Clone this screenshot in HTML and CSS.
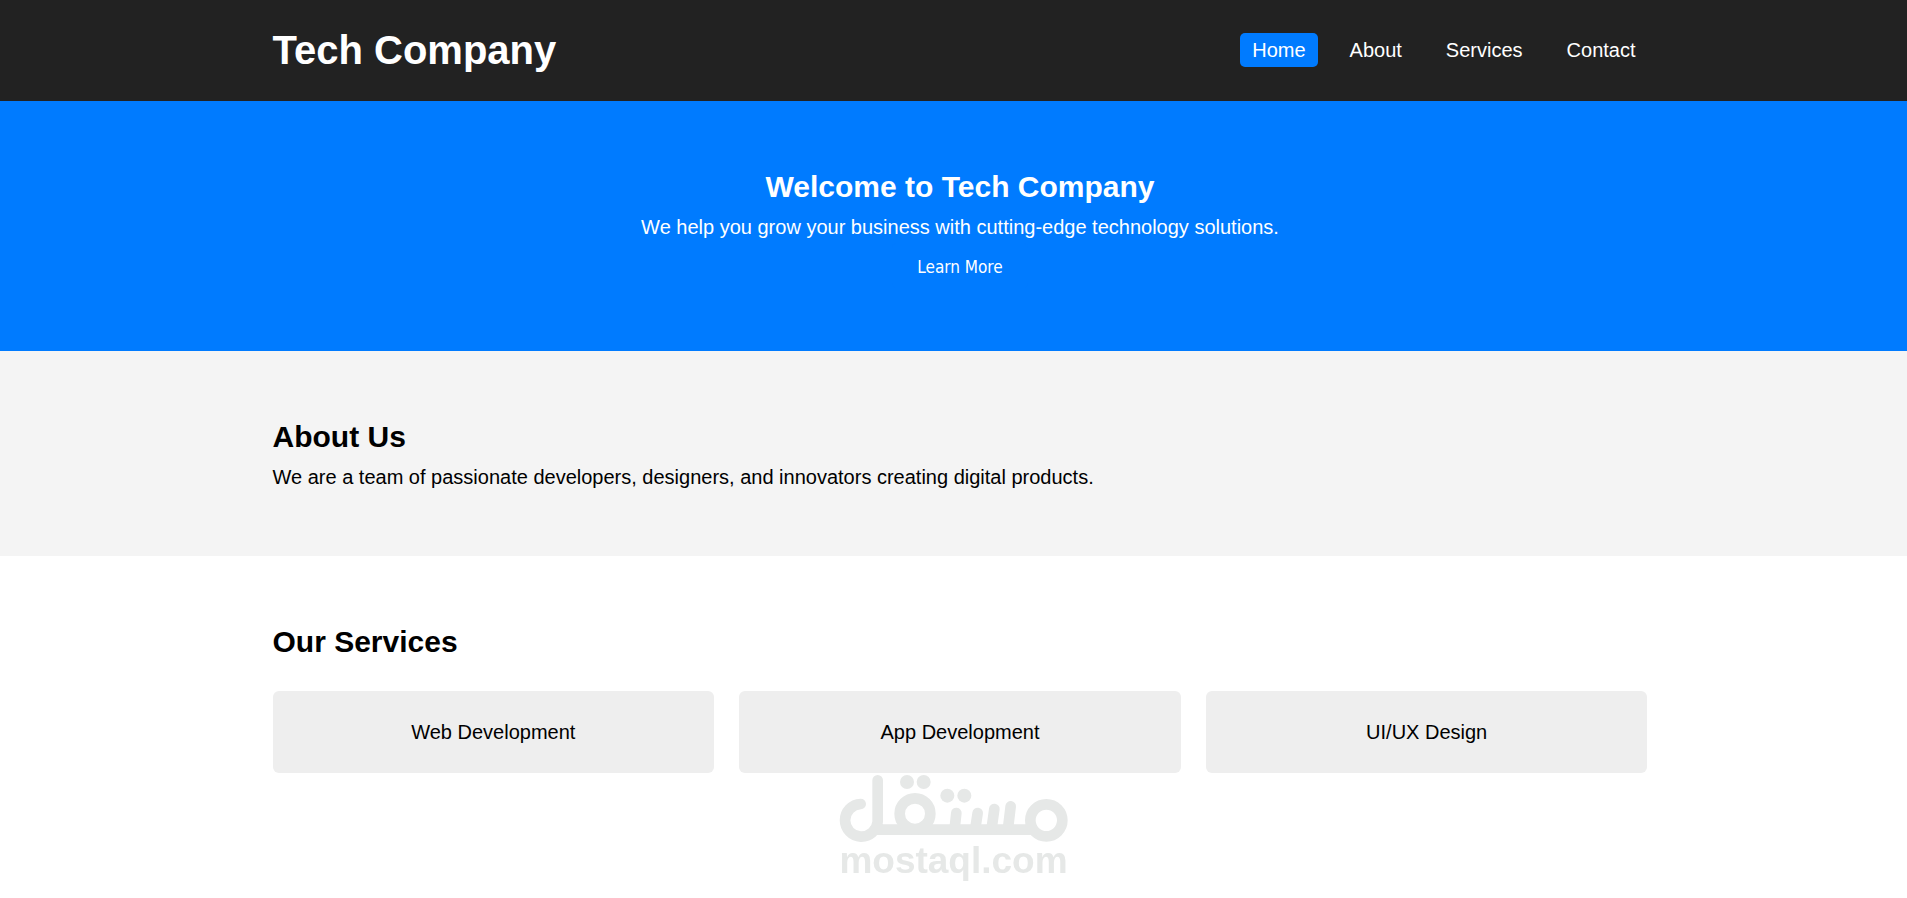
FILE: index.html
```
<!DOCTYPE html>
<html lang="en">
<head>
    <meta charset="UTF-8">
    <meta name="viewport" content="width=device-width, initial-scale=1.0">
    <title>Tech Company</title>
    <link rel="stylesheet" href="styles.css">
</head>
<body>

<header>
    <div class="container">
        <h1>Tech Company</h1>
        <nav>
            <ul>
                <li><a href="#home" class="active">Home</a></li>
                <li><a href="#about">About</a></li>
                <li><a href="#services">Services</a></li>
                <li><a href="#contact">Contact</a></li>
            </ul>
        </nav>
    </div>
</header>

<section id="home" class="hero">
    <div class="container">
        <h2>Welcome to Tech Company</h2>
        <p>We help you grow your business with cutting-edge technology solutions.</p>
        <button type="button">Learn More</button>
    </div>
</section>

<section id="about" class="about">
    <div class="container">
        <h2>About Us</h2>
        <p>We are a team of passionate developers, designers, and innovators creating digital products.</p>
    </div>
</section>

<section id="services" class="services">
    <div class="container">
        <h2>Our Services</h2>
        <div class="service-list">
            <div class="service">Web Development</div>
            <div class="service">App Development</div>
            <div class="service">UI/UX Design</div>
        </div>
    </div>
</section>

<div class="watermark">
    <svg viewBox="57 45 687 201" aria-hidden="true">
        <g fill="none" stroke="#e6e8e7" stroke-width="32" stroke-linecap="round" stroke-linejoin="round">
            <path d="M122 132A49 49 0 1 0 173 185V61"/>
            <path d="M165 209H630"/>
            <path d="M409 159L404 205M473 159L466 205M523 147L515 205M572 139L564 205"/>
            <circle cx="285" cy="161" r="46"/>
            <circle cx="679" cy="181" r="48"/>
        </g>
        <g fill="#e6e8e7">
            <path d="M160 192H189V225H160Z"/>
            <circle cx="261" cy="66" r="21"/>
            <circle cx="311" cy="66" r="21"/>
            <circle cx="382" cy="107" r="21"/>
            <circle cx="433" cy="107" r="21"/>
        </g>
    </svg>
    <span>mostaql.com</span>
</div>

</body>
</html>
```
FILE: styles.css
```
* {
    margin: 0;
    padding: 0;
    box-sizing: border-box;
}

body {
    font-family: "Liberation Sans", Arial, sans-serif;
    font-size: 20px;
    line-height: 32px;
    background-color: #fff;
    color: #000;
}

.container {
    max-width: 1375px;
    margin: 0 auto;
}

header {
    background-color: #222;
    color: #fff;
    padding: 18px 0 19px 13px;
}

header .container {
    display: flex;
    justify-content: space-between;
    align-items: center;
}

h1 {
    font-size: 40px;
    line-height: 64px;
}

h2 {
    font-size: 30px;
    line-height: 48px;
}

nav ul {
    display: flex;
    gap: 20px;
    list-style: none;
}

nav a {
    display: block;
    padding: 6px 12px;
    line-height: 22px;
    color: #fff;
    text-decoration: none;
    border-radius: 5px;
}

nav a:hover,
nav a.active {
    background-color: #007bff;
}

section {
    padding: 62px 0 63px 13px;
}

.hero {
    background-color: #007bff;
    color: #fff;
    text-align: center;
}

.hero button {
    padding: 12px 25px 8px;
    font-family: Tahoma, "DejaVu Sans Condensed", "DejaVu Sans", sans-serif;
    font-size: 17px;
    line-height: 25px;
    vertical-align: top;
    background-color: #007bff;
    color: #fff;
    border: none;
    border-radius: 5px;
    cursor: pointer;
}

.about {
    background-color: #f4f4f4;
}

.service-list {
    display: grid;
    grid-template-columns: repeat(3, 1fr);
    gap: 25px;
    margin-top: 25px;
}

.service {
    padding: 25px;
    background-color: #eee;
    text-align: center;
    border-radius: 6px;
}

.watermark {
    position: fixed;
    left: 0;
    right: 0;
    bottom: 18px;
    display: flex;
    flex-direction: column;
    align-items: center;
    pointer-events: none;
}

.watermark svg {
    width: 229px;
    height: 67px;
}

.watermark span {
    font-size: 37px;
    font-weight: bold;
    line-height: 38px;
    color: #e6e8e7;
}
```
